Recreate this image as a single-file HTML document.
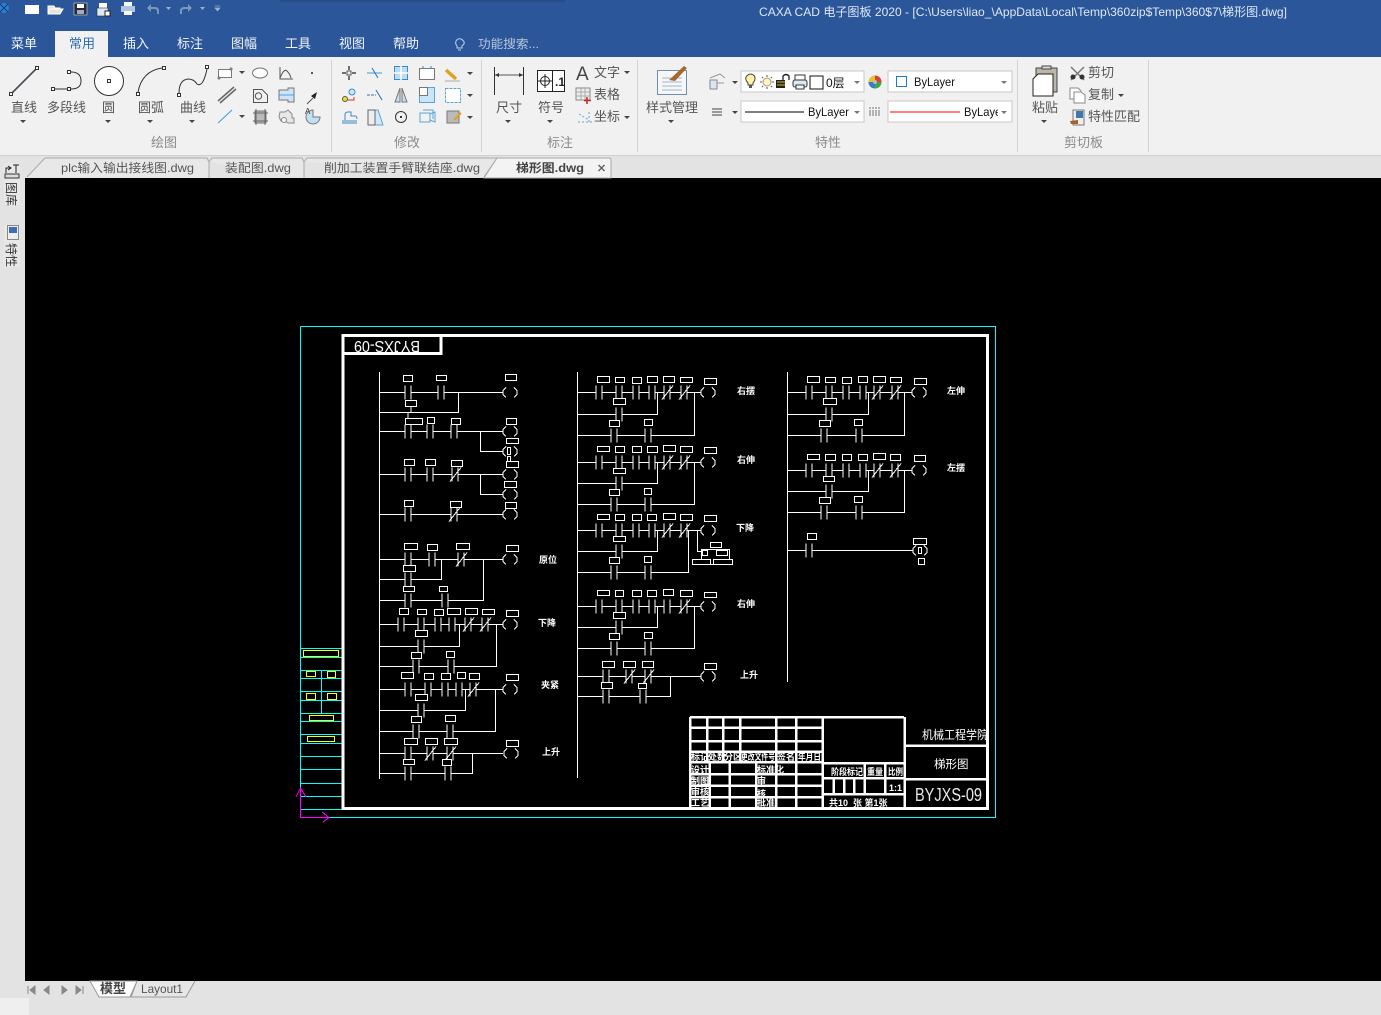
<!DOCTYPE html>
<html lang="zh"><head><meta charset="utf-8"><title>CAXA CAD</title>
<style>
html,body{margin:0;padding:0;background:#e3e3e3;overflow:hidden;width:1381px;height:1015px}
svg{display:block}
text{font-family:"Liberation Sans","Noto Sans CJK SC",sans-serif;white-space:pre}
.r{font-size:13px;fill:#555}
.s{font-size:13px;fill:#8a8a8a}
.tab{font-size:13px;fill:#f2f5fa}
.ft{font-size:12px;fill:#555}
.cad{shape-rendering:crispEdges}
.cad path,.cad rect,.cad use{fill:none}
.w{stroke:#fff;stroke-width:1;fill:none}
.l rect{fill:#000;stroke:#fff;stroke-width:1}
.lab{font-size:9px;fill:#fff;font-weight:bold}
.tb{font-size:9px;fill:#fff;font-weight:bold}
.ic{fill:none;stroke:#555;stroke-width:1}
.bl{fill:none;stroke:#3a9bdc;stroke-width:1}
.tri{fill:#444}
</style></head><body>
<svg width="1381" height="1015" viewBox="0 0 1381 1015" xmlns="http://www.w3.org/2000/svg">
<defs>
<g id="c"><rect x="-3" y="-2" width="6" height="4" style="fill:#000;stroke:none"/><path d="M-3-7V7M3-7V7" class="w"/></g>
<g id="n"><rect x="-3" y="-2" width="6" height="4" style="fill:#000;stroke:none"/><path d="M-3-7V7M3-7V7M-5 7L6-7" class="w"/></g>
<g id="k"><path d="M3-5L0-2V2L3 5M11-5L14-2V2L11 5" class="w"/></g>
<path id="t" d="M-3 0H3L0 3Z" class="tri"/>
</defs>

<!-- base -->
<rect width="1381" height="1015" fill="#e3e3e3"/>
<rect width="1381" height="57" fill="#2b579a"/>
<rect x="280" y="0" width="285" height="2" fill="#23406f" opacity=".45"/>
<rect y="57" width="1381" height="98" fill="#f1f1f1"/>
<rect y="155" width="1381" height="1" fill="#d0d0d0"/>
<rect x="25" y="178" width="1356" height="803" fill="#000"/>
<rect y="998" width="29" height="17" fill="#efefef"/>

<!-- quick access -->
<circle cx="4" cy="8" r="5" fill="#2d7fd0"/><path d="M0 4L8 12M8 4L0 12" stroke="#0d3f80" fill="none"/>
<path d="M25 5H39V14H25Z" fill="#fff"/>
<path d="M48 14L50 9H63L60 14ZM48 13V6H54L55 8H60V9" fill="#e9e4d5" stroke="#fff"/>
<rect x="74" y="3" width="13" height="12" fill="#222b3a" stroke="#ddd" stroke-width=".6"/><rect x="77" y="4" width="7" height="4" fill="#fff"/><rect x="77" y="10" width="7" height="4" fill="#aab"/>
<path d="M99 3H107V11H99Z" fill="#fff"/><rect x="97" y="8" width="11" height="8" fill="#dfe8f2" stroke="#234" stroke-width=".6"/><rect x="105" y="11" width="5" height="5" fill="#fff" stroke="#222"/>
<rect x="124" y="2" width="8" height="5" fill="#fff"/><rect x="121" y="6" width="14" height="6" fill="#a9c8de"/><rect x="124" y="11" width="8" height="4" fill="#fff"/>
<path d="M147 8L151 4V7H155Q159 7 159 11V14H157V11Q157 9 154 9H151V12Z" fill="#7d95b8"/>
<path d="M166 7H171L168.500 10Z" fill="#9db0cd"/>
<path d="M192 8L188 4V7H184Q180 7 180 11V14H182V11Q182 9 185 9H188V12Z" fill="#7d95b8"/>
<path d="M200 7H205L202.500 10Z" fill="#9db0cd"/>
<path d="M215 6H220M215 8H220L217.500 11Z" stroke="#9db0cd" fill="#9db0cd" stroke-width=".7"/>
<text x="759" y="16" font-size="12" fill="#dfe7f3" textLength="528" lengthAdjust="spacingAndGlyphs">CAXA CAD 电子图板 2020 - [C:\Users\liao_\AppData\Local\Temp\360zip$Temp\360$7\梯形图.dwg]</text>

<!-- tabs -->
<rect x="55" y="31" width="53" height="26" fill="#f1f1f1"/>
<text class="tab" x="11" y="48">菜单</text>
<text class="tab" x="69" y="48" style="fill:#2b6cb0">常用</text>
<text class="tab" x="123" y="48">插入</text>
<text class="tab" x="177" y="48">标注</text>
<text class="tab" x="231" y="48">图幅</text>
<text class="tab" x="285" y="48">工具</text>
<text class="tab" x="339" y="48">视图</text>
<text class="tab" x="393" y="48">帮助</text>
<path d="M457 48V46Q455 44 456 41Q458 38 461 39Q465 41 464 44Q463 45 462 46V48ZM458 50H461" fill="none" stroke="#c2cfe2"/>
<text x="478" y="48" font-size="12" fill="#b9c6dc" textLength="61" lengthAdjust="spacingAndGlyphs">功能搜索...</text>

<!-- dividers -->
<path d="M331.500 60V152M481.500 60V152M637.500 60V152M1017.500 60V152M1148.500 60V152" stroke="#d2d2d2" fill="none"/>

<!-- draw large -->
<path d="M11 94L37 68" stroke="#4a4a58" stroke-width="1.600"/>
<g fill="#fff" stroke="#333">
<rect x="9.500" y="92.500" width="3" height="3"/><rect x="35.500" y="66.500" width="3" height="3"/>
<path d="M54 89H67M71 72Q81 72 81 81Q81 89 71 89" fill="none"/>
<rect x="51.500" y="87.500" width="3" height="3"/><rect x="67.500" y="87.500" width="3" height="3"/><rect x="67.500" y="70.500" width="3" height="3"/>
<circle cx="109" cy="81" r="14.500"/><rect x="107.500" y="79.500" width="3" height="3"/>
<path d="M138 92Q142 71 162 68" fill="none"/>
<rect x="136.500" y="92.500" width="3" height="3"/><rect x="162.500" y="66.500" width="3" height="3"/>
<path d="M179 93Q179 80 188 79Q194 79 197 84Q203 88 207 69" fill="none"/>
<rect x="177.500" y="93.500" width="3" height="3"/><rect x="205.500" y="65.500" width="3" height="3"/>
</g>
<text class="r" x="11" y="112">直线</text><text class="r" x="47" y="112">多段线</text><text class="r" x="102" y="112">圆</text><text class="r" x="138" y="112">圆弧</text><text class="r" x="180" y="112">曲线</text>
<use href="#t" x="23" y="120"/><use href="#t" x="108" y="120"/><use href="#t" x="150" y="120"/><use href="#t" x="192" y="120"/>

<!-- draw small -->
<path d="M218.500 69.500H231.500V77.500H218.500Z" fill="#fff" stroke="#777"/><circle cx="219" cy="78" r="1" fill="#fff" stroke="#666"/><circle cx="231" cy="69" r="1" fill="#fff" stroke="#666"/><use href="#t" x="242" y="71"/>
<ellipse cx="260" cy="73" rx="7.500" ry="5" fill="#fff" stroke="#777"/>
<path d="M280 67V79H293M280 78Q284 68 287 71Q290 74 291 78" class="ic" stroke-width=".8"/>
<rect x="311" y="72" width="2" height="2" fill="#555"/>
<path d="M218 101L234 87M220 103L236 89" stroke="#666" stroke-width="1.500"/>
<path d="M253.500 89.500H262L267.500 95V102.500H253.500Z" class="ic"/><circle cx="258.500" cy="96" r="3.200" class="ic"/>
<path d="M279 90H288V88H294V102H288V100H279Z" fill="#cfe3f4" stroke="#777"/><path d="M279 95H294" stroke="#4aa3df"/>
<path d="M307 104L313 98" stroke="#555"/><path d="M311 96L317 92L315 99Z" fill="#222"/>
<path d="M218 123L232 110" class="bl" stroke-width="1.300"/><use href="#t" x="242" y="115"/>
<rect x="255" y="111" width="11" height="12" fill="#bbb" stroke="#777"/><path d="M253 113H268M253 121H268M256 109V125M265 109V125" stroke="#666"/>
<path d="M280 112H285L288 110L292 114V118H294V123H288L285 121H281L279 117Z" fill="#e7e7e7" stroke="#8a8a8a"/><circle cx="284" cy="120" r="2.500" fill="#f5f5f5" stroke="#888"/>
<path d="M313 117H320A7 7 0 1 1 313 110Z" fill="#bfe0f5" stroke="#777"/><text x="305" y="114" font-size="8" fill="#333">A</text>

<!-- modify -->
<g class="ic">
<rect x="347" y="71" width="4" height="4"/><path d="M349 66V70M349 76V80M342 73H346M352 73H356" stroke="#444" stroke-width="1.500"/>
<path d="M367 73H382" class="bl"/><path d="M372 68L378 78" stroke="#2273b8" fill="none"/>
<rect x="394.500" y="66.500" width="13" height="13" fill="#bcdcf3" stroke="#3a8bc8"/><path d="M401 66V80M394 73H408" stroke="#fff" stroke-width="1.500"/>
<rect x="419.500" y="68.500" width="15" height="11" fill="#fff" stroke="#777"/><path d="M423 66V69M431 66V69" stroke="#3a8bc8"/>
<path d="M446 70L456 79" stroke="#e2a020" stroke-width="3.500"/><path d="M445 81H460" stroke="#aaa"/>
<circle cx="345" cy="99" r="2.500" fill="#f0e020" stroke="#555"/><circle cx="352" cy="92" r="3" fill="#cfe6f8" stroke="#3a8bc8"/><path d="M347 100H354V97" stroke="#c33"/>
<path d="M367 95H376" stroke="#3a6ea5" stroke-dasharray="3 1"/><path d="M376 90L382 100" stroke="#2273b8"/>
<path d="M400 88V102H395ZM402 88L407 102H402Z" fill="#c8dcec" stroke="#777"/>
<rect x="419.500" y="87.500" width="15" height="15" fill="#cbe5f8" stroke="#5aa5d8"/><rect x="419.500" y="87.500" width="8" height="8" fill="#fff" stroke="#777"/>
<rect x="445.500" y="88.500" width="15" height="14" fill="#fff" stroke="#5aa5d8" stroke-dasharray="3 1"/>
<path d="M342 121H357M342 123H357M345 120V115Q345 112 348 112H351V116H355Q357 116 357 119" stroke="#3a8bc8"/>
<path d="M368 110H378L383 125H368Z" fill="#d3e9f8" stroke="#5aa5d8"/><path d="M368 110H375V125H368Z" fill="#eee" stroke="#666"/>
<circle cx="401" cy="117" r="5.500" stroke="#333"/><rect x="400" y="116" width="2" height="2" fill="#333" stroke="none"/>
<path d="M420 113H430V122H420ZM423 110H433V119M430 114L435 112V122L430 120" stroke="#5aa5d8"/>
<rect x="447" y="111" width="12" height="12" fill="#bbb" stroke="#777"/><path d="M454 120L461 113" stroke="#e2a020" stroke-width="2"/>
</g>
<use href="#t" x="470" y="72"/><use href="#t" x="470" y="94"/><use href="#t" x="470" y="116"/>
<text class="s" x="151" y="147">绘图</text><text class="s" x="394" y="147">修改</text><text class="s" x="547" y="147">标注</text><text class="s" x="815" y="147">特性</text><text class="s" x="1064" y="147">剪切板</text>

<!-- annotate -->
<path d="M494.500 67V95M523.500 67V95" stroke="#333" fill="none"/><path d="M495 75H523" stroke="#555"/><path d="M495 75L499 73V77ZM523 75L519 73V77Z" fill="#333"/>
<text class="r" x="496" y="112">尺寸</text><use href="#t" x="508" y="120"/>
<rect x="537.500" y="70.500" width="27" height="21" fill="#fff" stroke="#222"/><path d="M552.500 70V91" stroke="#222"/><circle cx="545" cy="81" r="4.500" fill="none" stroke="#222"/><path d="M538 81H552M545 74V88" stroke="#222"/><text x="555" y="86" font-size="12" font-weight="bold" fill="#222">.1</text>
<text class="r" x="538" y="112">符号</text><use href="#t" x="550" y="120"/>
<text x="576" y="80" font-size="19" fill="#444">A</text><text class="r" x="594" y="77">文字</text><use href="#t" x="627" y="71"/>
<rect x="576" y="88" width="14" height="12" fill="#eee" stroke="#888"/><path d="M576 92H590M576 96H590M581 88V100M585 88V100" stroke="#aaa"/><path d="M587 97V104M584 100.500H591" stroke="#c22" stroke-width="1.500"/>
<text class="r" x="594" y="99">表格</text>
<path d="M578 122H592M589 112V124M579 114L589 120" stroke="#6a9fce" stroke-dasharray="2 2" fill="none"/>
<text class="r" x="594" y="121">坐标</text><use href="#t" x="627" y="116"/>

<!-- style -->
<rect x="657.500" y="70.500" width="29" height="24" fill="#f7f7f7" stroke="#6f8fb0"/><path d="M662 78H682M662 82H682M662 86H682M662 90H682" stroke="#9db4cc"/>
<path d="M669 80L684 66L687 68L675 81Z" fill="#a8672a"/>
<text class="r" x="646" y="112">样式管理</text><use href="#t" x="671" y="120"/>

<!-- properties -->
<path d="M710 78L720 74L725 78M712 83H724" stroke="#999" fill="none"/><rect x="710" y="80" width="7" height="9" fill="#dde6ef" stroke="#889"/><use href="#t" x="735" y="81"/>
<rect x="741" y="71" width="123" height="21" fill="#fff" stroke="#c8c8c8"/>
<path d="M748 85V83Q745 80 746 77Q748 74 751 74Q755 75 755 78Q755 81 753 83V85Z" fill="#fdf2a8" stroke="#444"/><rect x="749" y="85" width="3" height="3" fill="#555"/>
<circle cx="767" cy="82" r="4" fill="#fff3c8" stroke="#a97"/><path d="M767 75V77M767 87V89M760 82H762M772 82H774M762 77L763 78M771 86L772 87M772 77L771 78M763 86L762 87" stroke="#555"/>
<rect x="776" y="80" width="9" height="8" fill="#222"/><path d="M777 82H785M777 85H785" stroke="#d8c020"/><path d="M783 80V76Q786 73 789 76V80" fill="none" stroke="#222" stroke-width="1.300"/>
<rect x="793" y="80" width="14" height="7" rx="2" fill="#dfe9f2" stroke="#333"/><rect x="795" y="75" width="10" height="5" fill="#fff" stroke="#333"/><rect x="796" y="85" width="8" height="4" fill="#fff" stroke="#333"/>
<rect x="810" y="76" width="13" height="13" fill="#fff" stroke="#111"/>
<text x="826" y="87" font-size="12" fill="#111">0层</text><path d="M854 81H860L857 84Z" fill="#777"/>
<circle cx="875" cy="82" r="6.500" fill="#e8c22a"/><path d="M875 82V75.500A6.500 6.500 0 0 1 881.500 82Z" fill="#d8403a"/><path d="M875 82H881.500A6.500 6.500 0 0 1 875 88.500Z" fill="#3aa840"/><path d="M875 82V88.500A6.500 6.500 0 0 1 868.500 82Z" fill="#3a78d8"/><circle cx="875" cy="82" r="2" fill="#bbb"/>
<rect x="888" y="71" width="124" height="21" fill="#fff" stroke="#c8c8c8"/><rect x="896.500" y="76.500" width="10" height="10" fill="#fff" stroke="#1a7ad0"/>
<text x="914" y="86" font-size="12" fill="#111" textLength="41" lengthAdjust="spacingAndGlyphs">ByLayer</text><path d="M1001 81H1007L1004 84Z" fill="#777"/>
<path d="M712 109H722M712 112H722M712 115H722" stroke="#444"/><use href="#t" x="735" y="111"/>
<rect x="741" y="101" width="123" height="21" fill="#fff" stroke="#c8c8c8"/><path d="M745 112H804" stroke="#000"/>
<text x="808" y="116" font-size="12" fill="#111" textLength="41" lengthAdjust="spacingAndGlyphs">ByLayer</text><path d="M854 111H860L857 114Z" fill="#777"/>
<path d="M869 108H881M869 111H881M869 113H881M869 115H881" stroke="#777" stroke-dasharray="2 1"/>
<rect x="888" y="101" width="124" height="21" fill="#fff" stroke="#c8c8c8"/><path d="M890 112H960" stroke="#f00"/>
<svg x="964" y="103" width="34" height="18"><text x="0" y="13" font-size="12" fill="#111" textLength="41" lengthAdjust="spacingAndGlyphs">ByLayer</text></svg><path d="M1001 111H1007L1004 114Z" fill="#777"/>

<!-- clipboard -->
<rect x="1036" y="68" width="21" height="24" fill="#bdb7ab" stroke="#444"/><rect x="1042" y="66" width="9" height="3" fill="#ddd" stroke="#444"/><path d="M1038 74H1053V96H1033V79Z" fill="#fff" stroke="#222"/>
<text class="r" x="1032" y="112">粘贴</text><use href="#t" x="1044" y="120"/>
<path d="M1071 67L1084 80M1084 67L1071 80" stroke="#777" stroke-width="1.500"/><circle cx="1073" cy="77" r="2.500" fill="#333"/><circle cx="1082" cy="77" r="2.500" fill="#333"/>
<text class="r" x="1088" y="77">剪切</text>
<path d="M1070 88H1078L1081 91V99H1070Z" fill="#fff" stroke="#888"/><path d="M1074 92H1081L1085 95V103H1074Z" fill="#fff" stroke="#888"/>
<text class="r" x="1088" y="99">复制</text><use href="#t" x="1121" y="94"/>
<rect x="1073" y="110" width="11" height="15" fill="#eee" stroke="#777"/><rect x="1076" y="111" width="7" height="7" fill="#3f78b0"/><path d="M1070 121L1078 120V124H1071Z" fill="#a5622a"/>
<text class="r" x="1088" y="121">特性匹配</text>

<!-- doc tabs -->
<path d="M27 177L45 158H207L209 162V178" fill="#e8e8e8" stroke="#aaa"/>
<path d="M209 162L212 158H302L304 162V178" fill="#e8e8e8" stroke="#aaa"/>
<path d="M304 162L307 158H497L484 177" fill="#e8e8e8" stroke="#aaa"/>
<path d="M484 178L497 158H609Q611 158 611 160V178Z" fill="#f3f3f3" stroke="#aaa"/>
<text class="ft" x="61" y="172" textLength="133" lengthAdjust="spacingAndGlyphs">plc输入输出接线图.dwg</text>
<text class="ft" x="225" y="172" textLength="66" lengthAdjust="spacingAndGlyphs">装配图.dwg</text>
<text class="ft" x="324" y="172" textLength="156" lengthAdjust="spacingAndGlyphs">削加工装置手臂联结座.dwg</text>
<text x="516" y="172" font-size="12" font-weight="bold" fill="#444" textLength="68" lengthAdjust="spacingAndGlyphs">梯形图.dwg</text>
<path d="M598.500 165L604.500 171M604.500 165L598.500 171" stroke="#666" stroke-width="1.500"/>

<!-- left strip -->
<rect x="4" y="163" width="16" height="42" fill="#e8e8e8"/><rect x="4" y="225" width="16" height="42" fill="#e8e8e8"/>
<rect x="5" y="174" width="14" height="4" fill="#ddd" stroke="#333"/><path d="M6 173V168H10M8 166L11 168L8 170M13 165H19M16 165V173" stroke="#222" fill="none"/>
<rect x="7.500" y="225.500" width="11" height="14" fill="#eee" stroke="#888"/><rect x="9" y="227" width="8" height="6" fill="#3f6fb0"/>
<text transform="translate(7,182) rotate(90)" font-size="12" fill="#333">图库</text>
<text transform="translate(7,243) rotate(90)" font-size="12" fill="#333">特性</text>

<!-- bottom -->
<path d="M28 986V994M35 986L30 990L35 994Z M49 986L44 990L49 994Z M62 986L67 990L62 994Z M76 986L81 990L76 994Z M83 986V994" fill="#888" stroke="#888"/>
<path d="M90 981L99 997H130L137 981Z" fill="#fff" stroke="#999"/>
<path d="M137 981L131 997H186L195 981" fill="#e6e6e6" stroke="#999"/>
<text x="100" y="993" font-size="13" font-weight="bold" fill="#444">模型</text>
<text x="141" y="993" font-size="12" fill="#555" textLength="42" lengthAdjust="spacingAndGlyphs">Layout1</text>

<!-- CAD -->
<g class="cad">
<path d="M300.500 326.500H995.500V817.500H329" stroke="#0ff" fill="none"/>
<path d="M300.500 326.500V788" stroke="#0ff" fill="none"/>
<path d="M301 648.500H342M301 657.500H342M301 670.500H342M301 678.500H342M301 691.500H342M301 700.500H342M301 713.500H342M301 721.500H342M301 734.500H342M301 743.500H342M301 756.500H342M301 769.500H342M301 783.500H342M301 796.500H342M301 809.500H342M321.500 670V713" stroke="#0ff" fill="none"/>
<g stroke="#ff0" fill="none"><rect x="303.500" y="650.500" width="35" height="6"/><rect x="306.500" y="671.500" width="9" height="5"/><rect x="327.500" y="671.500" width="8" height="6"/><rect x="306.500" y="693.500" width="9" height="6"/><rect x="327.500" y="693.500" width="9" height="6"/><rect x="309.500" y="715.500" width="24" height="5"/><rect x="307.500" y="736.500" width="27" height="5"/></g>
<path d="M300.500 788V817.500H329M296 797L300.500 788L306 797M322 812L329 817.500L323 822" stroke="#f0f" fill="none"/>
<!-- frame -->
<path d="M343 335.500H987.500V808.500H343ZM343 353.500H441V335" stroke="#fff" stroke-width="3" fill="none"/>
<text transform="translate(420,341) rotate(180)" font-size="16" fill="#fff" textLength="66" lengthAdjust="spacingAndGlyphs">BYJXS-09</text>

<!-- column 1 wires -->
<path class="w" d="M379.500 372V779M380 392.500H503M458.500 392V412.500H380M380 431.500H503M480.500 431V451.500H503M380 474.500H503M480.500 474V494.500H503M380 514.500H503M380 559.500H503M441.500 559V579.500H380M483.500 559V600.500H380M380 624.500H503M459.500 624V646.500H380M496.500 624V666.500H380M380 689.500H503M465.500 689V710.500H380M495.500 689V731.500H380M380 753.500H503M472.500 753V773.500H380"/>
<path class="w" d="M411 400V412M408 412V418"/>
<g>
<use href="#c" x="408" y="392.500"/><use href="#c" x="441" y="392.500"/><use href="#c" x="408" y="431.500"/><use href="#c" x="430" y="431.500"/><use href="#c" x="454" y="431.500"/>
<use href="#c" x="408" y="474.500"/><use href="#c" x="430" y="474.500"/><use href="#n" x="455" y="474.500"/><use href="#c" x="408" y="514.500"/><use href="#n" x="454" y="514.500"/>
<use href="#c" x="408" y="559.500"/><use href="#c" x="432" y="559.500"/><use href="#n" x="461" y="559.500"/><use href="#c" x="408" y="579.500"/><use href="#c" x="408" y="600.500"/><use href="#c" x="445" y="600.500"/>
<use href="#c" x="401" y="624.500"/><use href="#c" x="421" y="624.500"/><use href="#c" x="438" y="624.500"/><use href="#c" x="452" y="624.500"/><use href="#n" x="468" y="624.500"/><use href="#n" x="485" y="624.500"/><use href="#c" x="421" y="646.500"/><use href="#c" x="416" y="666.500"/><use href="#c" x="451" y="666.500"/>
<use href="#c" x="408" y="689.500"/><use href="#c" x="428" y="689.500"/><use href="#c" x="445" y="689.500"/><use href="#c" x="459" y="689.500"/><use href="#n" x="473" y="689.500"/><use href="#c" x="421" y="710.500"/><use href="#c" x="416" y="731.500"/><use href="#c" x="450" y="731.500"/>
<use href="#c" x="408" y="753.500"/><use href="#n" x="430" y="753.500"/><use href="#n" x="450" y="753.500"/><use href="#c" x="408" y="773.500"/><use href="#c" x="448" y="773.500"/>
<use href="#k" x="503" y="392.500"/><use href="#k" x="503" y="431.500"/><use href="#k" x="503" y="451.500"/><use href="#k" x="503" y="474.500"/><use href="#k" x="503" y="494.500"/><use href="#k" x="503" y="514.500"/><use href="#k" x="503" y="559.500"/><use href="#k" x="503" y="624.500"/><use href="#k" x="503" y="689.500"/><use href="#k" x="504" y="753.500"/>
</g>
<g class="l">
<rect x="403.500" y="375.500" width="9" height="6"/><rect x="436.500" y="375.500" width="10" height="5"/><rect x="505.500" y="374.500" width="11" height="6"/><rect x="405.500" y="400.500" width="11" height="6"/>
<rect x="405.500" y="418.500" width="17" height="6"/><rect x="427.500" y="417.500" width="7" height="6"/><rect x="451.500" y="418.500" width="9" height="6"/><rect x="506.500" y="418.500" width="10" height="6"/><rect x="506.500" y="438.500" width="12" height="5"/><rect x="507.500" y="447.500" width="3" height="7"/><rect x="507.500" y="456.500" width="3" height="5"/>
<rect x="404.500" y="459.500" width="10" height="6"/><rect x="425.500" y="459.500" width="10" height="6"/><rect x="451.500" y="460.500" width="11" height="6"/><rect x="506.500" y="461.500" width="12" height="6"/><rect x="504.500" y="481.500" width="12" height="6"/>
<rect x="404.500" y="500.500" width="9" height="6"/><rect x="450.500" y="501.500" width="11" height="6"/><rect x="505.500" y="502.500" width="11" height="6"/>
<rect x="404.500" y="543.500" width="13" height="6"/><rect x="427.500" y="544.500" width="10" height="6"/><rect x="456.500" y="543.500" width="13" height="6"/><rect x="506.500" y="545.500" width="12" height="6"/><rect x="403.500" y="565.500" width="12" height="6"/><rect x="403.500" y="586.500" width="11" height="5"/><rect x="439.500" y="586.500" width="8" height="5"/>
<rect x="399.500" y="608.500" width="9" height="6"/><rect x="417.500" y="609.500" width="9" height="5"/><rect x="434.500" y="609.500" width="9" height="6"/><rect x="447.500" y="608.500" width="13" height="6"/><rect x="465.500" y="608.500" width="12" height="6"/><rect x="482.500" y="609.500" width="12" height="5"/><rect x="506.500" y="610.500" width="12" height="6"/><rect x="415.500" y="630.500" width="12" height="6"/><rect x="411.500" y="652.500" width="10" height="6"/><rect x="446.500" y="651.500" width="8" height="6"/>
<rect x="401.500" y="672.500" width="12" height="6"/><rect x="424.500" y="673.500" width="9" height="6"/><rect x="441.500" y="673.500" width="9" height="6"/><rect x="457.500" y="672.500" width="8" height="6"/><rect x="469.500" y="673.500" width="10" height="6"/><rect x="506.500" y="674.500" width="12" height="6"/><rect x="415.500" y="694.500" width="12" height="6"/><rect x="411.500" y="716.500" width="10" height="6"/><rect x="445.500" y="715.500" width="10" height="6"/>
<rect x="404.500" y="738.500" width="13" height="6"/><rect x="425.500" y="738.500" width="12" height="6"/><rect x="444.500" y="738.500" width="13" height="6"/><rect x="506.500" y="740.500" width="12" height="6"/><rect x="403.500" y="759.500" width="11" height="5"/><rect x="442.500" y="759.500" width="9" height="6"/>
</g>

<!-- column 2 wires -->
<path class="w" d="M577.500 372V778M578 392.500H701M657.500 392V414.500H578M694.500 392V435.500H578M578 462.500H701M657.500 462V483.500H578M694.500 462V504.500H578M578 530.500H701M657.500 530V551.500H578M688.500 530V572.500H578M697.500 530V551.500H701M578 606.500H701M657.500 606V627.500H578M694.500 606V648.500H578M578 676.500H701M670.500 676V696.500H578"/>
<use href="#c" x="599" y="392.500"/><use href="#c" x="619" y="392.500"/><use href="#c" x="636" y="392.500"/><use href="#c" x="652" y="392.500"/><use href="#n" x="667" y="392.500"/><use href="#n" x="684" y="392.500"/><use href="#c" x="619" y="414.500"/><use href="#c" x="614" y="435.500"/><use href="#c" x="648" y="435.500"/>
<use href="#c" x="599" y="462.500"/><use href="#c" x="619" y="462.500"/><use href="#c" x="636" y="462.500"/><use href="#c" x="652" y="462.500"/><use href="#n" x="667" y="462.500"/><use href="#n" x="684" y="462.500"/><use href="#c" x="619" y="483.500"/><use href="#c" x="614" y="504.500"/><use href="#c" x="648" y="504.500"/>
<use href="#c" x="599" y="530.500"/><use href="#c" x="619" y="530.500"/><use href="#c" x="636" y="530.500"/><use href="#c" x="652" y="530.500"/><use href="#n" x="667" y="530.500"/><use href="#n" x="684" y="530.500"/><use href="#c" x="619" y="551.500"/><use href="#c" x="614" y="572.500"/><use href="#c" x="648" y="572.500"/>
<use href="#c" x="599" y="606.500"/><use href="#c" x="619" y="606.500"/><use href="#c" x="636" y="606.500"/><use href="#c" x="652" y="606.500"/><use href="#c" x="667" y="606.500"/><use href="#n" x="684" y="606.500"/><use href="#c" x="619" y="627.500"/><use href="#c" x="614" y="648.500"/><use href="#c" x="648" y="648.500"/>
<use href="#c" x="606" y="676.500"/><use href="#n" x="629" y="676.500"/><use href="#n" x="648" y="676.500"/><use href="#c" x="606" y="696.500"/><use href="#c" x="643" y="696.500"/>
<use href="#k" x="701" y="392.500"/><use href="#k" x="701" y="462.500"/><use href="#k" x="701" y="530.500"/><use href="#k" x="701" y="606.500"/><use href="#k" x="701" y="676.500"/>
<g class="l">
<rect x="597.500" y="376.500" width="12" height="6"/><rect x="615.500" y="377.500" width="9" height="5"/><rect x="632.500" y="377.500" width="9" height="6"/><rect x="647.500" y="376.500" width="10" height="6"/><rect x="663.500" y="376.500" width="11" height="6"/><rect x="680.500" y="377.500" width="12" height="5"/><rect x="704.500" y="378.500" width="12" height="6"/><rect x="613.500" y="398.500" width="12" height="6"/><rect x="609.500" y="420.500" width="10" height="6"/><rect x="644.500" y="419.500" width="8" height="6"/>
<rect x="597.500" y="446.500" width="12" height="5"/><rect x="615.500" y="446.500" width="9" height="6"/><rect x="632.500" y="446.500" width="9" height="6"/><rect x="647.500" y="446.500" width="10" height="6"/><rect x="663.500" y="445.500" width="12" height="6"/><rect x="680.500" y="446.500" width="12" height="6"/><rect x="704.500" y="447.500" width="12" height="6"/><rect x="613.500" y="468.500" width="12" height="5"/><rect x="609.500" y="489.500" width="10" height="6"/><rect x="644.500" y="488.500" width="7" height="6"/>
<rect x="597.500" y="514.500" width="12" height="5"/><rect x="615.500" y="514.500" width="9" height="6"/><rect x="632.500" y="514.500" width="9" height="6"/><rect x="647.500" y="514.500" width="9" height="6"/><rect x="663.500" y="513.500" width="12" height="6"/><rect x="680.500" y="514.500" width="12" height="6"/><rect x="704.500" y="515.500" width="12" height="6"/><rect x="613.500" y="536.500" width="12" height="5"/><rect x="609.500" y="557.500" width="10" height="6"/><rect x="644.500" y="556.500" width="7" height="6"/>
<rect x="597.500" y="590.500" width="12" height="5"/><rect x="615.500" y="590.500" width="8" height="6"/><rect x="632.500" y="590.500" width="9" height="6"/><rect x="647.500" y="590.500" width="9" height="6"/><rect x="663.500" y="589.500" width="10" height="6"/><rect x="680.500" y="590.500" width="12" height="6"/><rect x="704.500" y="592.500" width="12" height="5"/><rect x="613.500" y="612.500" width="12" height="6"/><rect x="609.500" y="633.500" width="10" height="6"/><rect x="644.500" y="632.500" width="8" height="6"/>
<rect x="602.500" y="661.500" width="12" height="6"/><rect x="623.500" y="661.500" width="12" height="6"/><rect x="642.500" y="661.500" width="11" height="6"/><rect x="601.500" y="682.500" width="11" height="6"/><rect x="638.500" y="683.500" width="8" height="5"/><rect x="704.500" y="663.500" width="12" height="6"/>
<rect x="701.500" y="549.500" width="28" height="15"/><rect x="710.500" y="542.500" width="11" height="5"/><rect x="716.500" y="550.500" width="11" height="5"/><rect x="702.500" y="550.500" width="5" height="5"/><rect x="692.500" y="559.500" width="18" height="5"/><rect x="713.500" y="559.500" width="19" height="5"/>
</g>

<!-- column 3 wires -->
<path class="w" d="M787.500 372V682M788 392.500H912M868.500 392V414.500H788M904.500 392V435.500H788M788 470.500H912M868.500 470V491.500H788M904.500 470V512.500H788M788 550.500H913"/>
<use href="#c" x="809" y="392.500"/><use href="#c" x="829" y="392.500"/><use href="#c" x="846" y="392.500"/><use href="#c" x="863" y="392.500"/><use href="#n" x="877" y="392.500"/><use href="#n" x="895" y="392.500"/><use href="#c" x="829" y="414.500"/><use href="#c" x="824" y="435.500"/><use href="#c" x="859" y="435.500"/>
<use href="#c" x="809" y="470.500"/><use href="#c" x="829" y="470.500"/><use href="#c" x="846" y="470.500"/><use href="#c" x="863" y="470.500"/><use href="#n" x="877" y="470.500"/><use href="#n" x="895" y="470.500"/><use href="#c" x="829" y="491.500"/><use href="#c" x="824" y="512.500"/><use href="#c" x="859" y="512.500"/>
<use href="#c" x="809" y="550.500"/>
<use href="#k" x="912" y="392.500"/><use href="#k" x="912" y="470.500"/><use href="#k" x="913" y="550.500"/>
<g class="l">
<rect x="807.500" y="376.500" width="12" height="6"/><rect x="825.500" y="377.500" width="10" height="5"/><rect x="842.500" y="377.500" width="9" height="6"/><rect x="858.500" y="376.500" width="9" height="6"/><rect x="873.500" y="376.500" width="12" height="6"/><rect x="890.500" y="377.500" width="11" height="5"/><rect x="914.500" y="378.500" width="12" height="6"/><rect x="823.500" y="398.500" width="13" height="6"/><rect x="819.500" y="420.500" width="11" height="6"/><rect x="854.500" y="419.500" width="8" height="6"/>
<rect x="807.500" y="454.500" width="12" height="5"/><rect x="825.500" y="454.500" width="10" height="6"/><rect x="842.500" y="454.500" width="9" height="6"/><rect x="858.500" y="454.500" width="9" height="6"/><rect x="873.500" y="453.500" width="12" height="6"/><rect x="890.500" y="454.500" width="10" height="6"/><rect x="914.500" y="455.500" width="11" height="6"/><rect x="823.500" y="476.500" width="11" height="5"/><rect x="819.500" y="497.500" width="11" height="6"/><rect x="854.500" y="496.500" width="8" height="6"/>
<rect x="807.500" y="533.500" width="9" height="6"/><rect x="913.500" y="538.500" width="13" height="6"/><rect x="918.500" y="547.500" width="3" height="6"/><rect x="918.500" y="558.500" width="6" height="6"/>
</g>

<!-- title block -->
<path d="M690 717H904M690 727.500H822M690 741H822M690 751.500H822M690 762H822M690 774H822M690 785.500H822M690 797H822M690 717V808M707 717V762M723 717V762M740 717V762M776 717V808M796 717V808M822.500 717V808M709.500 762V808M729.500 762V808M756 762V808M904.500 717V808M904 745.500H987M904 779H987M822 763H904M822 778H904M822 794H904M864.500 763V794M885 763V794M833.500 778V794M844 778V794M854 778V794" stroke="#fff" stroke-width="2.500" fill="none"/>
</g>

<!-- CAD text -->
<g class="lab">
<text x="539" y="563">原位</text><text x="538" y="626">下降</text><text x="541" y="688">夹紧</text><text x="542" y="755">上升</text>
<text x="737" y="394">右摆</text><text x="737" y="463">右伸</text><text x="736" y="531">下降</text><text x="737" y="607">右伸</text><text x="740" y="678">上升</text>
<text x="947" y="394">左伸</text><text x="947" y="471">左摆</text>
</g>
<g class="tb">
<text x="691" y="760">标记</text><text x="708" y="760">处数</text><text x="724" y="760">分区</text><text x="741" y="760" textLength="34" lengthAdjust="spacingAndGlyphs">更改文件号</text><text x="777" y="760">签名</text><text x="798" y="760" textLength="23" lengthAdjust="spacingAndGlyphs">年月日</text>
<text x="691" y="773">设计</text><text x="691" y="784">制图</text><text x="691" y="795">审核</text><text x="691" y="806">工艺</text>
<text x="757" y="773">标准化</text><text x="757" y="784">审</text><text x="757" y="797">核</text><text x="757" y="806">批准</text>
<text x="831" y="775" textLength="32" lengthAdjust="spacingAndGlyphs">阶段标记</text><text x="867" y="775" textLength="16" lengthAdjust="spacingAndGlyphs">重量</text><text x="888" y="775" textLength="15" lengthAdjust="spacingAndGlyphs">比例</text>
<text x="889" y="791">1:1</text>
<text x="829" y="806">共10</text><text x="853" y="806">张 第1张</text>
</g>
<text x="922" y="739" font-size="12" fill="#fff" textLength="66" lengthAdjust="spacingAndGlyphs">机械工程学院</text>
<text x="934" y="768" font-size="11.500" fill="#fff">梯形图</text>
<text x="915" y="801" font-size="18" fill="#e8e8e8" textLength="67" lengthAdjust="spacingAndGlyphs">BYJXS-09</text>
</svg>
</body></html>
